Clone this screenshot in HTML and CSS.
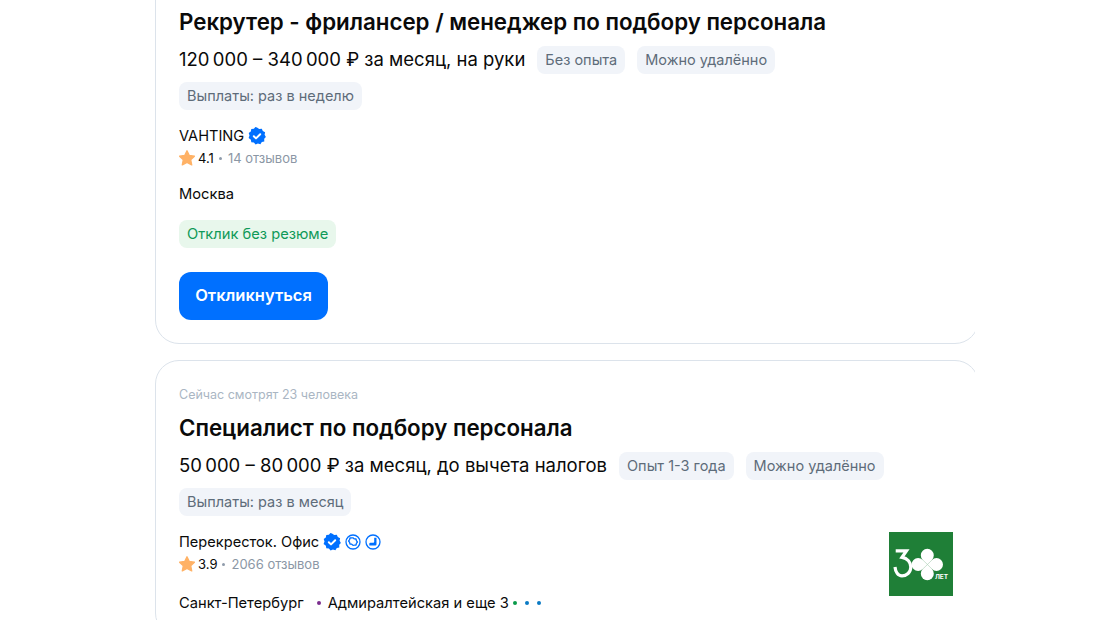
FILE: index.html
```html
<!DOCTYPE html>
<html lang="ru">
<head>
<meta charset="utf-8">
<title>Вакансии</title>
<link rel="stylesheet" href="styles.css">
</head>
<body>
<svg class="defs" width="0" height="0" aria-hidden="true">
  <defs>
    <symbol id="verified" viewBox="0 0 18 18">
      <path fill="#0070ff" d="M9 .6l2.200 1.300 2.600-.2 1 2.400 2.300 1.200-.5 2.500L17.900 9.900l-1.700 1.900.1 2.600-2.500.7-1.400 2.100-2.500-.7-2.300 1.100-1.700-2-2.600-.3-.4-2.600L.6 10.900 1.500 8.500.7 6l2.100-1.500.5-2.600 2.600-.1L7.400 0z"/>
      <path fill="none" stroke="#fff" stroke-width="2" stroke-linecap="round" stroke-linejoin="round" d="M5.800 9.200l2.200 2.200 4.200-4.200"/>
    </symbol>
    <symbol id="star" viewBox="1 1 14 14">
      <path fill="#ffb266" stroke="#ffb266" stroke-width="1.200" stroke-linejoin="round" d="M8 1.700l2 4.100 4.500.6-3.300 3.100.9 4.500L8 11.800l-4.100 2.200.9-4.500-3.300-3.100L6 5.800z"/>
    </symbol>
  </defs>
</svg>
<main class="feed">
  <article class="card card-first">
    <h2 class="title">Рекрутер - фрилансер / менеджер по подбору персонала</h2>
    <div class="tags">
      <span class="salary">120&thinsp;000 – 340&thinsp;000 ₽ за месяц, на руки</span>
      <span class="tag">Без опыта</span>
      <span class="tag">Можно удалённо</span>
    </div>
    <div class="tags tags-second"><span class="tag">Выплаты: раз в неделю</span></div>
    <div class="company">
      <span>VAHTING</span>
      <svg class="ico-verified"><use href="#verified"/></svg>
    </div>
    <div class="rating">
      <svg class="ico-star"><use href="#star"/></svg>
      <span class="score">4.1</span><span class="sep"></span><span class="reviews">14 отзывов</span>
    </div>
    <div class="city">Москва</div>
    <div class="badge-row"><span class="badge-green">Отклик без резюме</span></div>
    <button class="respond" type="button">Откликнуться</button>
  </article>

  <article class="card card-second">
    <div class="watching">Сейчас смотрят 23 человека</div>
    <h2 class="title title-second">Специалист по подбору персонала</h2>
    <div class="tags">
      <span class="salary">50&thinsp;000 – 80&thinsp;000 ₽ за месяц, до вычета налогов</span>
      <span class="tag">Опыт 1-3 года</span>
      <span class="tag">Можно удалённо</span>
    </div>
    <div class="tags tags-second"><span class="tag">Выплаты: раз в месяц</span></div>
    <div class="employer">
      <div>
        <div class="company">
          <span>Перекресток. Офис</span>
          <svg class="ico-verified"><use href="#verified"/></svg>
          <svg class="ico-ring" viewBox="0 0 16 16"><circle cx="8" cy="8" r="7" fill="none" stroke="#0070ff" stroke-width="1.300"/><path fill="none" stroke="#0070ff" stroke-width="1.300" stroke-linejoin="round" d="M8 3.800l1.300 1.100 1.700.1.400 1.700 1 1.300-1 1.400-.4 1.600-1.700.2L8 11.300l-1.300-1.100-1.700-.2-.4-1.600-1-1.400 1-1.300.4-1.700 1.700-.1z"/></svg>
          <svg class="ico-ring" viewBox="0 0 16 16"><circle cx="8" cy="8" r="7" fill="none" stroke="#0070ff" stroke-width="1.300"/><path fill="#0070ff" d="M9.200 3.800h2.300v6.500a1.200 1.200 0 0 1-1.200 1.200H4.300V9.800a1 1 0 0 1 1-1h2.900a1 1 0 0 0 1-1z"/></svg>
        </div>
        <div class="rating">
          <svg class="ico-star"><use href="#star"/></svg>
          <span class="score">3.9</span><span class="sep"></span><span class="reviews">2066 отзывов</span>
        </div>
      </div>
      <svg class="logo" viewBox="0 0 64 64" role="img" aria-label="30 лет">
        <rect width="64" height="64" fill="#1f7f37"/>
        <path fill="none" stroke="#fff" stroke-width="3.200" d="M6.700 18.800H17.500L13 25.300C18.500 26 21.800 30.500 21.800 35 21.800 40.500 17.500 43.800 13 43.800 9 43.800 6.500 40 6 35"/>
        <g fill="#fff" transform="translate(38.300 32.500)">
          <path d="M0 0-4.600-4.600a6.500 6.500 0 1 1 9.200 0z"/>
          <path transform="rotate(90)" d="M0 0-4.600-4.600a6.500 6.500 0 1 1 9.200 0z"/>
          <path transform="rotate(180)" d="M0 0-4.600-4.600a6.500 6.500 0 1 1 9.200 0z"/>
          <path transform="rotate(270)" d="M0 0-4.600-4.600a6.500 6.500 0 1 1 9.200 0z"/>
        </g>
        <text class="logo-text" x="46" y="46.500">ЛЕТ</text>
      </svg>
    </div>
    <div class="metro">
      <span>Санкт-Петербург</span>
      <span class="dot dot-purple"></span>
      <span>Адмиралтейская и еще 3</span>
      <span class="dot dot-green"></span>
      <span class="dot dot-blue"></span>
      <span class="dot dot-blue"></span>
    </div>
  </article>
</main>
</body>
</html>
```
FILE: styles.css
```css
* { box-sizing: border-box; }
html, body { margin: 0; height: 620px; overflow: hidden; background: #fff; }
body { font-family: Inter, "Liberation Sans", sans-serif; color: #0a0a0a; }
.defs { position: absolute; }
.feed {
  width: 820px;
  margin-left: 155px;
  margin-top: -26px;
  display: flex;
  flex-direction: column;
  gap: 16px;
  overflow: hidden;
}
.card {
  width: 824px;
  border: 1px solid #dce3eb;
  border-radius: 24px;
  padding: 23px;
  background: #fff;
}
.card-second { padding-top: 27px; }
.title { margin: 0; font-size: 22.300px; line-height: 48px; font-weight: 600; }
.title-second { margin-top: 1px; }
.tags { display: flex; align-items: center; gap: 12px; height: 28px; }
.tags-second { margin-top: 8px; }
.salary { font-size: 18.500px; line-height: 28px; margin-bottom: 2px; }
.tag {
  font-size: 14.500px;
  line-height: 20px;
  padding: 4px 8px;
  border-radius: 8px;
  background: #f1f4f9;
  color: #5e6c7a;
}
.company { display: flex; align-items: center; gap: 4px; margin-top: 14px; height: 24px; font-size: 14.600px; }
.ico-verified { width: 18px; height: 18px; }
.ico-ring { width: 16px; height: 16px; }
.rating { display: flex; align-items: center; height: 20px; font-size: 13px; }
.ico-star { width: 16px; height: 16px; margin-right: 3px; }
.sep { width: 3px; height: 3px; border-radius: 50%; background: #8f9bab; margin: 0 6px 0 5px; }
.reviews { color: #8b97a5; }
.city { margin-top: 16px; font-size: 14.700px; line-height: 20px; }
.badge-row { margin-top: 16px; height: 28px; display: flex; }
.badge-green {
  font-size: 14.700px;
  line-height: 20px;
  padding: 4px 8px;
  border-radius: 8px;
  background: #e8f7ec;
  color: #0f9a58;
}
.respond {
  display: block;
  margin-top: 24px;
  padding: 0 0 2px;
  width: 149px;
  height: 48px;
  border: 0;
  border-radius: 12px;
  background: #0070ff;
  color: #fff;
  font: 600 16.500px Inter, "Liberation Sans", sans-serif;
}
.watching { font-size: 12.500px; line-height: 16px; color: #aab6c3; margin-top: -1px; }
.employer { display: flex; justify-content: space-between; align-items: flex-start; padding-right: 2px; }
.logo { width: 64px; height: 64px; margin-top: 16px; flex: none; }
.logo-text { font: 700 6.500px Inter, "Liberation Sans", sans-serif; fill: #fff; }
.metro { display: flex; align-items: center; gap: 4px; font-size: 14.700px; line-height: 20px; margin-top: -3px; }
.dot { width: 4px; height: 4px; border-radius: 50%; }
.dot-purple { background: #7b2d8e; margin: 0 3px 0 9px; }
.dot-green { background: #0a9a4a; }
.dot-blue { background: #0a7ac4; margin-left: 4px; }
```
